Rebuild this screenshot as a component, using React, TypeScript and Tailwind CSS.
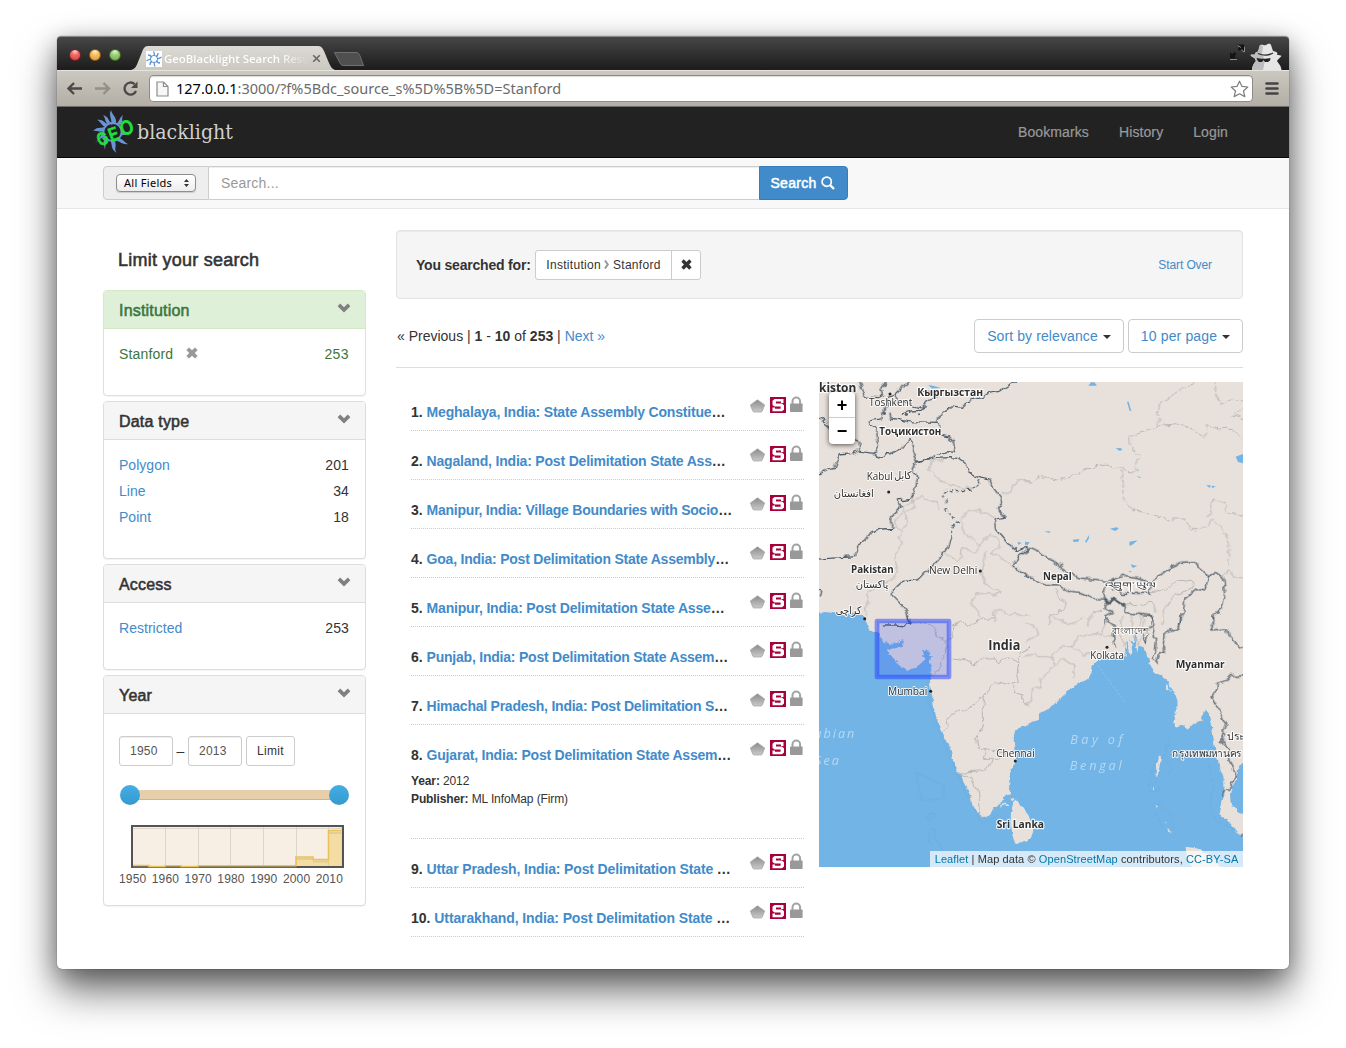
import type { ReactNode } from "react";

const results = [
  ["Meghalaya, India: State Assembly Constitue", "tracking-[-0.19px]"],
  ["Nagaland, India: Post Delimitation State Ass", "tracking-[-0.19px]"],
  ["Manipur, India: Village Boundaries with Socio", "tracking-[-0.24px]"],
  ["Goa, India: Post Delimitation State Assembly", "tracking-[-0.22px]"],
  ["Manipur, India: Post Delimitation State Asse", "tracking-[-0.18px]"],
  ["Punjab, India: Post Delimitation State Assem", "tracking-[-0.22px]"],
  ["Himachal Pradesh, India: Post Delimitation S", "tracking-[-0.24px]"],
  ["Gujarat, India: Post Delimitation State Assem", "tracking-[-0.2px]"],
  ["Uttar Pradesh, India: Post Delimitation State ", "tracking-[-0.15px]"],
  ["Uttarakhand, India: Post Delimitation State ", "tracking-[-0.12px]"],
];

function Chevron() {
  return (
    <svg width="14" height="10" viewBox="0 0 14 10" className="relative left-px mt-[-3px]">
      <path d="M0.6 3.2 L3.2 0.6 L7 4.2 L10.8 0.6 L13.4 3.2 L7 9.4Z" fill="#808080" />
    </svg>
  );
}

function Cross({ className, size }: { className: string; size: number }) {
  return (
    <svg width={size} height={size} viewBox="0 0 12 12" className={className}>
      <path
        d="M3 0.4 L6 3.2 L9 0.4 L11.6 3 L8.8 6 L11.6 9 L9 11.6 L6 8.8 L3 11.6 L0.4 9 L3.2 6 L0.4 3Z"
        fill="currentColor"
      />
    </svg>
  );
}

function Panel({ title, active, children }: { title: string; active?: boolean; children: ReactNode }) {
  return (
    <section
      className={
        active
          ? "overflow-hidden rounded border border-[#d6e9c6] bg-white shadow-[0_1px_1px_rgba(0,0,0,0.05)]"
          : "overflow-hidden rounded border border-[#ddd] bg-white shadow-[0_1px_1px_rgba(0,0,0,0.05)]"
      }
    >
      <h3
        className={
          active
            ? "flex h-[38px] items-center justify-between border-b border-[#d6e9c6] bg-[#dff0d8] px-[15px] text-[16px] tracking-[0.2px] text-[#3c763d] [-webkit-text-stroke:0.55px]"
            : "flex h-[38px] items-center justify-between border-b border-[#ddd] bg-[#f5f5f5] px-[15px] text-[16px] tracking-[0.2px] text-[#333] [-webkit-text-stroke:0.55px]"
        }
      >
        <span className="relative top-px">{title}</span>
        <Chevron />
      </h3>
      {children}
    </section>
  );
}

function Facets({ rows }: { rows: [string, string][] }) {
  return (
    <ul className="pt-3 pr-4 pb-7 pl-[15px]">
      {rows.map(([name, count]) => (
        <li key={name} className="flex h-[26px] items-center justify-between">
          <a className="tracking-[0.03px] text-[#428bca]">{name}</a>
          <span className="tracking-[0.1px]">{count}</span>
        </li>
      ))}
    </ul>
  );
}

function ResultIcons() {
  return (
    <span className="mt-[14px] flex h-[17px] w-[54px] shrink-0">
      <svg width="54" height="18" viewBox="0 0 54 18">
        <defs>
          <linearGradient id="pent" x1="0" y1="0" x2="0" y2="1">
            <stop offset="0" stopColor="#8c8c8c" />
            <stop offset="1" stopColor="#c9c9c9" />
          </linearGradient>
        </defs>
        <path d="M7.500 3.800 L14.700 9 L12.200 15.200 L11.200 16 H3.800 L2.800 15.200 L0.300 9Z" fill="url(#pent)" stroke="#a0a0a0" strokeWidth="0.700" />
        <rect x="20" y="1" width="16" height="16" fill="#a8003a" />
        <path
          d="M24.500 3H33.500V7H31V5.500H26V7.600H32L34 9.200V13.500L32 15.200H22.500V11.400H25V12.800H30.600V10.500H24.500L22.500 9V4.800Z"
          fill="#fff"
        />
        <path d="M42.500 8V5.500A3.800 4 0 0 1 50.100 5.500V8" fill="none" stroke="#a3a3a3" strokeWidth="2" />
        <rect x="40" y="7.500" width="12.600" height="8.500" rx="0.800" fill="#999" />
      </svg>
    </span>
  );
}

function WorldMap() {
  return (
    <svg width="424" height="485" viewBox="0 0 1272 1455" className="block" fontFamily="'Open Sans','Noto Sans','DejaVu Sans',sans-serif">
      <defs>
        <filter id="rough" filterUnits="userSpaceOnUse" x="-60" y="-60" width="1392" height="1575">
          <feTurbulence type="fractalNoise" baseFrequency="0.04" numOctaves="2" seed="4" />
          <feDisplacementMap in="SourceGraphic" scale="22" xChannelSelector="R" yChannelSelector="G" />
        </filter>
        <filter id="coast" filterUnits="userSpaceOnUse" x="-60" y="-60" width="1392" height="1575">
          <feTurbulence type="fractalNoise" baseFrequency="0.05" numOctaves="3" seed="9" />
          <feDisplacementMap in="SourceGraphic" scale="14" xChannelSelector="R" yChannelSelector="G" />
        </filter>
      </defs>
      <rect width="1272" height="1455" fill="#e8e0da" />
      <g filter="url(#coast)">
        <g transform="translate(-12 699)">
          <path
            fill="#73b4e6"
            d="M-30-7 40-8 70-3 90 2 105-5 125-8 150 10 158 28 162 45 178 50 195 52 195 62 205 78 220 86 245 84 268 75 262 92 245 98 215 104 222 118 238 136 258 152 275 164 298 160 318 148 328 130 320 122 330 120 325 105 332 112 340 104 342 120 355 128 342 132 348 150 350 180 345 195 346 215 350 235 356 270 362 300 370 325 382 350 395 380 408 405 413 435 425 458 440 490 455 520 468 545 470 565 485 590 505 610 525 600 535 580 558 565 562 550 575 538 588 535 582 510 585 475 595 450 602 430 598 400 596 370 600 350 612 338 630 335 645 322 668 315 672 300 690 290 715 265 735 255 755 235 775 215 800 200 820 190 830 175 828 160 840 145 848 135 880 130 920 130 932 122 930 95 940 108 944 122 952 110 946 70 956 85 968 110 970 90 985 95 990 110 1000 130 1005 150 1020 170 1035 180 1050 190 1062 205 1075 230 1082 250 1088 270 1085 290 1078 320 1080 335 1100 330 1120 345 1140 325 1160 315 1165 295 1170 285 1182 300 1185 320 1192 340 1195 370 1200 400 1210 440 1217 470 1228 500 1228 540 1220 570 1215 590 1218 605 1235 610 1250 630 1265 650 1284 670 1330 700V790H-30Z"
          />
          <path fill="#73b4e6" d="M1330 430 1284 445 1265 470 1262 500 1250 520 1245 540 1248 570 1265 580 1270 595 1284 600 1330 610Z" />
          <path fill="#e8e0da" d="M597 560 588 590 587 620 592 660 600 680 612 686 630 680 645 672 655 650 652 630 640 600 632 590 625 575 608 560Z" />
          <path fill="#e8e0da" d="M1112 695 1145 700 1160 708 1175 715 1190 730 1220 756V790H1150L1115 725Z" />
          <path fill="#e8e0da" d="M1032 422l6 0-3 25-8 40-7 2 4-30zM1015 515l5-2v12l-5 0zM1060 640l5 2 2 14-5-3zM1022 570l4 2-1 8zM1050 620l3 1 2 8zM1052 205l8 4 4 18-6 2zM1066 225l4 3-2 6z" />
          <path fill="none" stroke="#e8e0da" strokeWidth="5" d="M556 573l15-5 12 4M585 553l12 3" />
          <path fill="none" stroke="#73b4e6" strokeWidth="4" d="M940 120 936 80M958 90 962 60M1215 460 1205 480M1212 520 1204 540M328 130 345 112M332 125 350 135" />
        </g>
      </g>
      <g transform="translate(-12 699)">
        <g fill="none" stroke="#5fa3d8" strokeWidth="2" opacity="0.55">
          <path d="M303 472 388 512 385 550 320 557ZM340 600l15-5 8 5-15 14-12-2zM345 640l16 5-3 25 18 20 8 22M345 650l-5 30 12 10" />
          <path d="M1065 365l-6 25 14-2M1045 395l10-5-3 30-10 4M1030 430l-18 30-10 50 2 18 32 0-14-28M1055 440l18 25-30 20M1030 565l40 35 8 35-10 20-28-20-20-50M1180 450l15 60-10 60 20 50 50 20" strokeDasharray="12 8" />
          <path d="M335 190 340 260 385 380 450 530 500 625 550 600" opacity="0.7" />
        </g>
        <path d="M848 150 930 262" stroke="#9cc9ea" strokeWidth="2" strokeDasharray="8 5" />
      </g>

      {/* internal state lines */}
      <g filter="url(#rough)">
        <g fill="none" stroke="#b9b7b5" strokeWidth="3" strokeLinejoin="round">
          <g transform="translate(-12 -21)">
            <path d="M380 255 345 262 338 285 360 305 385 320 402 330 450 340 480 335 495 320M290 365 300 395 275 410 270 450 255 480 258 510 240 550 250 590 235 610 160 650 150 720" />
            <path d="M375 400 370 380 340 378 320 365 300 375 280 385 262 395 268 410 245 430 240 455 258 465M560 355 590 350 605 315 645 320M435 440 460 410 490 405 512 412 540 430M445 440 450 475 495 515 480 530 440 520 440 545 430 560 390 535 375 535M495 515 520 480 545 490 555 515 530 535 560 550 580 560 590 580 610 580 650 605" />
            <path d="M515 530 505 560 500 590 510 625 560 655 540 660 480 650 475 690 500 730M540 740 535 710 555 700 580 720 645 720" />
          </g>
          <g transform="translate(618 -21)">
            <path strokeDasharray="22 5" d="M0 318 20 318 50 302 95 315 160 298 180 282 240 270 295 285 340 290 328 262 345 245 315 215 310 185 400 153 450 146 510 165 540 188 542 152 580 165 620 160 654 192M400 153 402 95 440 62 475 37 505 30 512 5M565 5 570 45 588 90 620 78 670 82M670 90 625 120 670 132M288 290 295 330 292 370 320 400 345 405 375 418 430 432 480 432 495 460 515 468 550 452 560 430 600 472 610 510 612 580 605 600M555 380 575 372 600 390 610 415 635 418 670 425M555 380 560 405 550 430" />
            <path d="M90 640 100 670 118 680 112 705 75 720 78 750M380 650 420 645 455 615 505 620 500 640 450 660 420 700 410 750M300 690 340 688 385 685 395 710M612 580 590 605M612 580 635 610 670 615M190 750 200 715 235 705M340 720 345 750" />
          </g>
          <g transform="translate(-12 699)">
            <path d="M290 20 325 22 350 35 370 65 392 80 395 115 382 130 375 160 355 180M392 80 415 60 412 30 440 18 460 35 510 10 540 8M410 132 455 138 480 150 505 130 540 128 550 140 590 130 600 142 612 140 615 110 645 100M612 140 605 180 610 205 590 210 545 200 530 215 505 250 470 270 460 290 430 285 395 310 400 335 385 345" />
            <path d="M505 250 505 330 485 370 490 405 510 400 540 410 590 420M510 400 505 430 535 430 530 445 510 470 430 475M590 210 605 235 625 240 630 270 645 270M430 475 470 490 490 530 498 605M540 430 590 420" />
          </g>
          <g transform="translate(618 699)">
            <path d="M0 80 40 60 35 35 0 25M0 125 30 110 40 125 80 125 90 150 75 170 45 195 50 215 20 220 15 265 0 270M90 150 110 130 150 150 145 190M80 125 100 100 150 90 160 60 230 55 245 20M140 90 170 120 200 120M75 0 130 30 175 10M290 5 285 50 300 90M320 0 325 60 340 90M350 0 360 60M240 60 265 65M330 90 350 70" />
          </g>
        </g>

        {/* national borders */}
        <g fill="none" stroke="#4f5e6b" strokeWidth="3.800" strokeLinejoin="round">
          <g transform="translate(-12 -21)">
            <path d="M128 5 148 66 190 68 205 60 200 40 225 5M290 5 255 45 240 60 255 80 290 90 320 100 345 75 372 60 345 50 320 45M225 110 228 130 280 140 370 142 380 110 405 95 440 100 450 80 500 68 520 55 550 50 620 5M205 110 200 130 168 138 162 152 185 165 190 210 175 238 185 248 210 238 225 240 260 220 285 190 298 205 295 235 305 262 340 258 360 240 400 230 422 232 415 200 400 185 375 180 370 145M-5 120 40 152 55 170 85 185 130 200 135 228 175 235M-5 310 40 285 60 280 75 240 105 236 130 228" />
            <path d="M240 60 220 68 212 95 208 115M260 118l30-10 25-2 20-12M290 290 300 265 360 250 405 248 430 250 450 265 460 290 490 308 525 315 532 335 555 365 560 385 550 405 568 430 540 435 545 465 560 480 585 510 605 528 640 515M640 520 605 550 595 575 645 608M290 290 308 300 300 350 285 370 250 375 262 395 230 425 230 460 200 462 170 470 155 495 125 515 122 545 -5 553M410 487 400 515 370 555 335 590 310 615 270 612 235 645 235 662 258 685 275 710 285 750M0 640 20 645 16 665" />
            <path strokeDasharray="12 8" d="M490 315 495 328 470 342 430 350 395 345 380 355 392 385 390 405 410 425 430 442 408 455 410 487" />
          </g>
          <g transform="translate(618 -21)">
            <path d="M0 535 15 517 45 530 90 565 100 562 110 578 150 600 165 612 200 615 240 618 262 610 268 620 270 610 295 604 350 612 375 625 375 655 290 655 262 640 262 612M0 597 20 610 60 632 110 632 135 652 165 655 200 670 238 672 245 680 262 672 298 690M375 625 395 610 430 582 455 570 470 562 510 560 525 580 555 605 545 625 545 645 515 640 480 668 475 710 460 750M555 605 570 590 595 610 602 650 592 700 565 725 562 750M240 620 235 655 245 680 240 700 268 712 240 725 240 750M298 690 298 712 380 722 378 750" />
            <path strokeWidth="7" d="M240 672 255 682 268 674 282 686 298 688" />
          </g>
          <g transform="translate(-12 699)">
            <path d="M207 30 240 30 270 33 288 25 280-2" />
          </g>
          <g transform="translate(618 699)">
            <path d="M240 10 265 30 262 60 268 100M375 0 390 30 345 50 362 85 370 55M385 30 392 70 385 130 395 145 405 110 418 115 420 50 460 42 465 0M562 0 570 20 560 45 605 42 610 65 640 92 670 98M670 178 618 182 610 195 575 205 572 225 558 245 572 270 590 295 605 325 600 345 585 370 612 400 615 435 632 480 620 510 600 530 596 545M654 655v12" />
          </g>
        </g>
      </g>

      {/* lakes */}
      <g fill="#73b4e6" transform="translate(618 -21)">
        <path d="M190 32l8-10h10l8 10zM306 80l5 0 8 28h-5zM272 220l15-1 6 6-10 2zM334 304l14 2-3 3zM632 245l22-8v28l-15-4zM543 331l14 0-2 8zM560 332l12 2-10 6zM254 461l22-4 5 4-10 7zM58 470l14-2 5 6zM143 494l20-2-3 8-14 1zM180 500l12-20 0 10-8 13zM313 500l25-4-14 12-10 5zM317 568l20 5-14 6zM310 588h10l-4 4zM0 500l14 2-6 8-8-1z" />
        <path d="M-290 29l25 6 12 4-26 2zM-22 500l12 4-10 6z" />
      </g>
      <g fill="#56636d">
        <circle cx="300" cy="97" r="3" /><circle cx="262" cy="97" r="5" /><circle cx="196" cy="94" r="5" /><circle cx="272" cy="90" r="3" />
      </g>

      {/* selected extent */}
      <rect x="174" y="717" width="216" height="168" fill="#2540ff" fillOpacity="0.2" stroke="#2545ff" strokeOpacity="0.52" strokeWidth="14" strokeLinejoin="round" />

      <g fill="#222">
        <circle cx="213" cy="36" r="4.500" /><circle cx="209" cy="330" r="4.500" /><circle cx="484" cy="567" r="4.500" /><circle cx="137" cy="710" r="4.500" />
        <circle cx="335" cy="928" r="4.500" /><circle cx="589" cy="1137" r="4.500" /><circle cx="864" cy="796" r="4.500" />
      </g>

      <g fill="#2f2f2f" stroke="#fff" strokeOpacity="0.85" strokeWidth="7" strokeLinejoin="round" paintOrder="stroke">
        <g fontWeight="700" fontSize="35">
          <text x="0" y="30" textLength="112" lengthAdjust="spacingAndGlyphs">kiston</text>
          <text x="295" y="41" fontSize="31" textLength="197" lengthAdjust="spacingAndGlyphs">Кыргызстан</text>
          <text x="181" y="158" fontSize="31" textLength="186" lengthAdjust="spacingAndGlyphs">Тоҷикистон</text>
          <text x="96" y="572" fontSize="31" textLength="128" lengthAdjust="spacingAndGlyphs">Pakistan</text>
          <text x="508" y="804" fontSize="41" textLength="96" lengthAdjust="spacingAndGlyphs">India</text>
          <text x="672" y="593" fontSize="31" textLength="86" lengthAdjust="spacingAndGlyphs">Nepal</text>
          <text x="1070" y="859" fontSize="33" textLength="147" lengthAdjust="spacingAndGlyphs">Myanmar</text>
          <text x="533" y="1337" fontSize="32" textLength="142" lengthAdjust="spacingAndGlyphs">Sri Lanka</text>
        </g>
        <g fontSize="33" strokeWidth="6">
          <text x="150" y="71" textLength="130" lengthAdjust="spacingAndGlyphs">Toshkent</text>
          <text x="143" y="293" textLength="78" lengthAdjust="spacingAndGlyphs">Kabul</text>
          <text x="226" y="291" fontSize="32" textLength="52" lengthAdjust="spacingAndGlyphs">كابل</text>
          <text x="44" y="345" fontSize="32" textLength="120" lengthAdjust="spacingAndGlyphs">افغانستان</text>
          <text x="330" y="577" textLength="145" lengthAdjust="spacingAndGlyphs">New Delhi</text>
          <text x="110" y="617" fontSize="32" textLength="98" lengthAdjust="spacingAndGlyphs">پاکستان</text>
          <text x="50" y="697" fontSize="32" textLength="77" lengthAdjust="spacingAndGlyphs">کراچی</text>
          <text x="207" y="938" textLength="118" lengthAdjust="spacingAndGlyphs">Mumbai</text>
          <text x="532" y="1124" textLength="115" fontWeight="500" lengthAdjust="spacingAndGlyphs" stroke="#fff">Chennai</text>
          <text x="814" y="831" textLength="101" lengthAdjust="spacingAndGlyphs">Kolkata</text>
          <text x="878" y="757" fontSize="28" textLength="108" lengthAdjust="spacingAndGlyphs">বাংলাদেশ</text>
          <text x="857" y="618" fontSize="24" textLength="156" lengthAdjust="spacingAndGlyphs">འབྲུག་ཡུལ</text>
          <text x="1060" y="1124" fontSize="29" textLength="208" lengthAdjust="spacingAndGlyphs">กรุงเทพมหานคร</text>
          <text x="1224" y="1075" fontSize="29" textLength="52" lengthAdjust="spacingAndGlyphs">ประ</text>
        </g>
      </g>
      <g fill="#b4d8f4" fontStyle="italic" fontSize="38">
        <text x="-14" y="1068" textLength="120">abian</text>
        <text x="-12" y="1149" textLength="72">Sea</text>
        <text x="754" y="1085" textLength="156">Bay of</text>
        <text x="752" y="1163" textLength="156">Bengal</text>
      </g>
    </svg>
  );
}

function Histogram() {
  return (
    <svg width="213" height="43" viewBox="0 0 213 43" className="ml-3 block">
      <rect x="1" y="1" width="211" height="41" fill="#f8efe4" stroke="#545454" strokeWidth="2" />
      <path d="M34.500 2V41M67.500 2V41M99.500 2V41M132.500 2V41M165.500 2V41M197.500 2V41M2 3.500H211M210.500 2V41" stroke="#ddd5ca" fill="none" />
      <path d="M165 41V32H182V34.500H198V6H210V41Z" fill="#edc240" fillOpacity="0.4" />
      <path d="M2 42.500H165" stroke="#8a6f2c" strokeOpacity="0.6" />
      <path d="M198 8H210M166 34H181M182 36.500H197" stroke="#000" strokeOpacity="0.07" strokeWidth="2" />
      <path d="M2 40.500H18V41.500H34V40.800H50V41.500H67V40.800H165V32H182V34.500H197.500V5.500H210" fill="none" stroke="#e9c25a" strokeWidth="1.600" />
    </svg>
  );
}

function BrowserChrome() {
  return (
    <>
      <div className="flex h-[34px] items-end rounded-t-[4px] border-t border-[#8a8a8a] bg-linear-to-b from-[#474747] to-[#1c1c1c]">
        <div className="mb-[9px] ml-[12px] flex gap-2">
          <i className="size-3 rounded-full border border-[#7b1f1f] bg-[radial-gradient(circle_at_50%_15%,#fbd0cc_0,#ee6f6a_35%,#d8393a_100%)]" />
          <i className="size-3 rounded-full border border-[#8a5a14] bg-[radial-gradient(circle_at_50%_15%,#fff0c8_0,#f5bd62_40%,#e79c2e_100%)]" />
          <i className="size-3 rounded-full border border-[#3c6a26] bg-[radial-gradient(circle_at_50%_15%,#e0f5ce_0,#9ace7a_40%,#6bac47_100%)]" />
        </div>
        <div className="relative ml-[10px] h-[25px] w-[204px]">
          <svg width="204" height="25" viewBox="0 0 204 25" className="absolute inset-0">
            <defs>
              <linearGradient id="tab" x1="0" y1="0" x2="0" y2="1">
                <stop offset="0" stopColor="#dcdad5" />
                <stop offset="1" stopColor="#cbc8c0" />
              </linearGradient>
            </defs>
            <path d="M0 25C4 24 5 22 7 17L11 7C13 2 14 1 18 1H186C190 1 191 2 193 6L198 18C200 22 201 24 204 25Z" fill="url(#tab)" />
          </svg>
          <div className="relative flex h-full items-center pt-0.5 pl-[15px]">
            <svg width="16" height="16" viewBox="0 0 16 16" className="shrink-0">
              <rect width="16" height="16" fill="#fff" />
              <g stroke="#5b95d6" strokeWidth="1.300" fill="none">
                <path d="M8 5Q9 3 7.500 0.500M10 5.500Q12 5 12 2M11 7.500Q13 8 15.500 6M10.500 9.500Q11 12 14 12M8.500 11Q7.500 13 9 15.500M6 10.500Q4 11 4 14M5 8.500Q3 8 0.500 10M5.500 6.500Q5 4 2 4" />
                <circle cx="8" cy="8" r="3.600" strokeWidth="1" />
              </g>
            </svg>
            <span className="ml-0.5 w-[146px] overflow-hidden bg-linear-to-r from-white from-78% to-transparent bg-clip-text font-['Open_Sans'] text-[11.5px] font-semibold tracking-[-0.05px] whitespace-nowrap text-transparent">
              GeoBlacklight Search Resu
            </span>
            <svg width="9" height="9" viewBox="0 0 9 9" className="ml-[2px]">
              <path d="M1.200 1.200 7.800 7.800M7.800 1.200 1.200 7.800" stroke="#666" strokeWidth="1.600" />
            </svg>
          </div>
        </div>
        <svg width="32" height="16" viewBox="0 0 32 16" className="mb-[3px] ml-[-2px]">
          <path d="M1.500 1.500H23C26 1.500 26 3 27 5L30.500 14.500H11C8 14.500 7.500 13 6.500 11Z" fill="#4f4f4f" stroke="#707070" />
        </svg>
        <svg width="56" height="28" viewBox="0 0 56 28" className="mr-[6px] ml-auto">
          <path d="M10.500 2.500H17V9L14.800 6.800 12.500 9 10.500 7 12.800 4.700ZM3 10V16.500H9.500L7.300 14.300 9.500 12 7.500 10 5.200 12.200Z" fill="#141414" />
          <path d="M3 17.500H10M17.500 5V10M11 3.500l3 2M14.500 8l2.500 2" stroke="#8c8c8c" fill="none" />
          <path d="M33 3C36 2 37 4 39 3 41 2 43 1 44 3L46 9C50 9.500 51 11 50 13 52 13 53.500 13 54.500 14 53 16 51 17 50 19 51 21 54 23 54.500 28H25C25 24 27 21 29 19L27.500 16C25 15 24 14 23.500 13 25 12 26 13 28 12.500 27.500 11 29 10 31 9.500Z" fill="#e6e6e6" />
          <path d="M33 3 36 4 35 12 38 18 36 28H25C25 24 27 21 29 19L27.500 16C25 15 24 14 23.500 13L28 12.500C27.500 11 29 10 31 9.500Z" fill="#bdbdbd" />
          <path d="M31 11.500Q39 15 46 11" stroke="#2a2a2a" strokeWidth="1.300" fill="none" />
          <path d="M29.500 16C33 17 40 17 43.500 16L43 18.500 41 20H38L36.500 18 35 20H32L30.500 18.500Z" fill="#222" />
        </svg>
      </div>
      <div className="flex h-[37px] items-center border-t border-b border-t-[#e6e4df] border-b-[#6f6d69] bg-linear-to-b from-[#cbc8c0] to-[#b3aea6] pr-[10px] pl-[10px]">
        <svg width="76" height="20" viewBox="0 0 76 20" fill="none" strokeWidth="2.400">
          <path d="M15 9.500H1.500M7 4 1.500 9.500 7 15" stroke="#4b4a48" />
          <path d="M28 9.500H42M36.500 4 42 9.500 36.500 15" stroke="#949089" />
          <path d="M69 12A6 6 0 1 1 67.500 5.100" stroke="#4b4a48" />
          <path d="M70.500 2.500V9H64Z" fill="#4b4a48" />
        </svg>
        <div className="ml-[6px] flex h-[27px] w-[1104px] items-center rounded border border-[#8f8c87] bg-white shadow-[inset_0_1px_1px_rgba(0,0,0,0.15)]">
          <svg width="13" height="16" viewBox="0 0 13 16" className="ml-[6px]">
            <path d="M1 1H7.500L12 5.500V15H1ZM7.500 1V5.500H12" fill="#f7f7f7" stroke="#8b8b8b" strokeWidth="1.200" />
          </svg>
          <span className="ml-[7px] pb-px font-['Noto_Sans'] text-[14.5px] tracking-[0.01px] whitespace-nowrap text-[#6b6b6b]">
            <span className="text-black">127.0.0.1</span>:3000/?f%5Bdc_source_s%5D%5B%5D=Stanford
          </span>
          <svg width="19" height="18" viewBox="0 0 19 18" className="mr-[3px] ml-auto">
            <path d="M9.500 1.200 12 6.400 17.800 7 13.500 11 14.800 16.600 9.500 13.800 4.200 16.600 5.500 11 1.200 7 7 6.400Z" fill="#fff" stroke="#7d7d7d" strokeWidth="1.200" strokeLinejoin="round" />
          </svg>
        </div>
        <svg width="14" height="15" viewBox="0 0 14 15" className="ml-3">
          <path d="M1.500 2.500H12.500M1.500 7.500H12.500M1.500 12.500H12.500" stroke="#444" strokeWidth="2.600" strokeLinecap="round" />
        </svg>
      </div>
    </>
  );
}

function Logo() {
  return (
    <svg width="145" height="46" viewBox="0 0 145 46">
      <g fill="#6a94d4">
        <path d="M19 1C20 6 25 8 24 14L19 16C21 11 16 7 19 1Z" />
        <path d="M31 6C29 10 32 12 28 16L24 15C28 12 27 9 31 6Z" />
        <path d="M39 24C36 22 33 24 29 22L29 26C33 27 35 24 39 24Z" />
        <path d="M36 35C33 34 31 30 27 29L25 32C29 33 31 36 36 35Z" />
        <path d="M25 44C21 40 26 37 22 31L18 31C21 36 18 40 25 44Z" />
        <path d="M13 41C14 37 12 35 17 31L14 29C9 33 13 37 13 41Z" />
        <path d="M3 34C6 33 7 29 13 28L11 24C7 27 8 31 3 34Z" />
        <path d="M1 22C5 21 8 24 12 22L12 18C8 20 6 17 1 22Z" />
        <path d="M5 11C9 12 9 17 14 18L16 15C12 14 11 10 5 11Z" />
        <path d="M11 6C14 9 12 13 17 16L19 14C16 11 17 8 11 6Z" />
      </g>
      <circle cx="20.500" cy="23" r="9" fill="none" stroke="#6a94d4" strokeWidth="1.800" />
      <g fill="#1fe03c" stroke="#1fe03c" strokeWidth="0.800" fontFamily="Inter, sans-serif" fontSize="18" fontWeight="500">
        <text transform="translate(8 37.500) rotate(-24)" fontSize="17" textLength="11" lengthAdjust="spacingAndGlyphs">G</text>
        <text transform="translate(19 33) rotate(-20)" textLength="10" lengthAdjust="spacingAndGlyphs">E</text>
        <text transform="translate(30 27) rotate(-16)" fontSize="19" textLength="13.500" lengthAdjust="spacingAndGlyphs">O</text>
      </g>
      <text x="45" y="30" fill="#d0d0d0" fontFamily="'DejaVu Serif', serif" fontSize="20" textLength="96" lengthAdjust="spacingAndGlyphs">blacklight</text>
    </svg>
  );
}

export default function App() {
  return (
    <div className="h-[1048px] w-[1346px] overflow-hidden bg-white pt-[36px] pl-[57px] font-['Liberation_Sans',Arial,sans-serif] text-[14px] leading-5 text-[#333]">
      <div className="h-[933px] w-[1232px] rounded-[5px] bg-white shadow-[0_0_1px_rgba(0,0,0,0.7),0_22px_40px_rgba(0,0,0,0.55),0_6px_24px_rgba(0,0,0,0.3)]">
        <BrowserChrome />

        <nav className="flex h-[51px] items-center border-b border-[#080808] bg-[#222] pl-[35px] text-[#999]">
          <Logo />
          <div className="mr-[61px] ml-auto flex gap-[30px] tracking-[0.1px] [-webkit-text-stroke:0.2px]">
            <a>Bookmarks</a>
            <a>History</a>
            <a>Login</a>
          </div>
        </nav>

        <div className="h-[51px] border-b border-[#e7e7e7] bg-[#f8f8f8] pt-2 pl-[46px]">
          <form className="flex h-[34px] w-[745px]">
            <div className="flex w-[106px] items-center rounded-l border border-[#ccc] bg-[#eee] pl-3">
              <span className="flex h-[18px] w-[80px] items-center justify-between rounded border border-[#8e8e8e] bg-linear-to-b from-white to-[#ededed] pr-[6px] pl-[7px] font-['Noto_Sans'] text-[11px] tracking-[0.3px] text-black shadow-[0_1px_1px_rgba(0,0,0,0.15)]">
                All Fields
                <svg width="5" height="8" viewBox="0 0 5 8"><path d="M2.500 0 5 3H0ZM2.500 8 5 5H0Z" fill="#333" /></svg>
              </span>
            </div>
            <div className="flex flex-1 items-center border-y border-[#ccc] bg-white pl-[12px] tracking-[0.2px] text-[#999] shadow-[inset_0_1px_1px_rgba(0,0,0,0.075)]">
              Search...
            </div>
            <div className="flex w-[89px] items-center justify-center gap-1 rounded-r border border-[#357ebd] bg-[#428bca] pr-0.5 tracking-[0.3px] text-white [-webkit-text-stroke:0.5px]">
              Search
              <svg width="14" height="14" viewBox="0 0 14 14" fill="none" stroke="#fff">
                <circle cx="5.700" cy="5.700" r="4.600" strokeWidth="1.700" />
                <path d="M9 9 13 13" strokeWidth="2.400" />
              </svg>
            </div>
          </form>
        </div>

        <div className="flex gap-[30px] pt-[21px] pl-[46px]">
          <aside className="w-[263px]">
            <h2 className="mt-5 mb-5 ml-[15px] text-[18px] tracking-[0.24px] [-webkit-text-stroke:0.55px]">Limit your search</h2>
            <div className="flex flex-col gap-[5px]">
              <Panel title="Institution" active>
                <div className="flex items-start pt-3 pr-4 pb-7 pl-[15px] text-[#3c763d]">
                  <span className="flex h-[26px] items-center tracking-[0.15px]">Stanford</span>
                  <Cross size={12} className="mt-[6px] ml-[13px] text-[#999]" />
                  <span className="ml-auto flex h-[26px] items-center tracking-[0.4px]">253</span>
                </div>
              </Panel>
              <Panel title="Data type">
                <Facets rows={[["Polygon", "201"], ["Line", "34"], ["Point", "18"]]} />
              </Panel>
              <Panel title="Access">
                <Facets rows={[["Restricted", "253"]]} />
              </Panel>
              <Panel title="Year">
                <div className="h-[191px] px-[15px] pt-[22px] text-[12px]">
                  <div className="flex h-[30px] items-center">
                    <span className="flex h-full w-[54px] items-center rounded-[3px] border border-[#ccc] pl-[10px] tracking-[0.25px] text-[#555] shadow-[inset_0_1px_1px_rgba(0,0,0,0.075)]">1950</span>
                    <span className="w-[15px] text-center text-[14px]">–</span>
                    <span className="flex h-full w-[54px] items-center rounded-[3px] border border-[#ccc] pl-[10px] tracking-[0.25px] text-[#555] shadow-[inset_0_1px_1px_rgba(0,0,0,0.075)]">2013</span>
                    <span className="ml-1 flex h-full w-[49px] items-center justify-center rounded-[3px] border border-[#ccc] tracking-[0.3px]">Limit</span>
                  </div>
                  <div className="mt-[19px] ml-px flex h-5 w-[229px] items-center">
                    <i className="z-10 size-5 shrink-0 rounded-full bg-linear-to-b from-[#45aee4] to-[#3499cf]" />
                    <i className="-mx-2.5 h-[10px] flex-1 border-b border-[#cdb493] bg-[#e8cfab]" />
                    <i className="z-10 size-5 shrink-0 rounded-full bg-linear-to-b from-[#45aee4] to-[#3499cf]" />
                  </div>
                  <div className="mt-5">
                    <Histogram />
                  </div>
                  <div className="flex w-[224px] justify-between pt-px tracking-[0.15px] text-[#545454]">
                    {["1950", "1960", "1970", "1980", "1990", "2000", "2010"].map((y) => (
                      <span key={y}>{y}</span>
                    ))}
                  </div>
                </div>
              </Panel>
            </div>
          </aside>

          <main className="w-[847px]">
            <div className="flex h-[69px] items-center rounded border border-[#e3e3e3] bg-[#f5f5f5] pr-[30px] pl-[19px] shadow-[inset_0_1px_1px_rgba(0,0,0,0.05)]">
              <b className="w-[119px] tracking-[-0.2px] whitespace-nowrap">You searched for:</b>
              <span className="flex h-[30px] items-center rounded-[3px] border border-[#ccc] bg-white text-[12px] tracking-[0.3px]">
                <span className="flex h-full w-[136px] items-center justify-center gap-[3px] border-r border-[#ccc]">
                  Institution
                  <svg width="6" height="9" viewBox="0 0 6 9"><path d="M1 0.500 3.800 4.500 1 8.500" stroke="#999" strokeWidth="2" fill="none" /></svg>
                  Stanford
                </span>
                <span className="flex w-[28px] justify-center">
                  <Cross size={11} className="text-[#333]" />
                </span>
              </span>
              <a className="ml-auto text-[12px] tracking-[-0.1px] text-[#428bca]">Start Over</a>
            </div>

            <div className="flex h-[69px] items-center border-b border-[#ddd] pb-0.5">
              <span className="pt-[7px] pl-px">
                « Previous | <b>1</b> - <b>10</b> of <b>253</b> | <a className="text-[#428bca]">Next »</a>
              </span>
              <div className="mt-[7px] ml-auto flex gap-1 text-[#428bca]">
                <span className="flex h-[34px] w-[150px] items-center justify-center gap-[5px] rounded border border-[#ccc] tracking-[0.1px]">
                  Sort by relevance
                  <i className="mt-0.5 border-x-4 border-t-4 border-x-transparent border-t-[#333]" />
                </span>
                <span className="flex h-[34px] w-[115px] items-center justify-center gap-[5px] rounded border border-[#ccc] tracking-[0.15px]">
                  10 per page
                  <i className="mt-0.5 border-x-4 border-t-4 border-x-transparent border-t-[#333]" />
                </span>
              </div>
            </div>

            <div className="mt-[14px] flex">
              <ol className="mr-[15px] ml-[15px] w-[393px]">
                {results.map(([title, tracking], i) => (
                  <li key={title} className={i === 7 ? "h-[114px] border-b border-dotted border-[#ccc]" : "h-[49px] border-b border-dotted border-[#ccc]"}>
                    <div className="flex justify-between">
                      <b className="pt-5 whitespace-nowrap">
                        {i + 1}. <a className={`text-[#428bca] ${tracking}`}>{title}</a>…
                      </b>
                      <ResultIcons />
                    </div>
                    {i === 7 && (
                      <div className="mt-[7px] text-[12px] leading-[18px] tracking-[-0.12px]">
                        <p><b>Year:</b> 2012</p>
                        <p><b>Publisher:</b> ML InfoMap (Firm)</p>
                      </div>
                    )}
                  </li>
                ))}
              </ol>

              <div className="relative h-[485px] w-[424px] overflow-hidden">
                <WorldMap />
                <div className="absolute top-[10px] left-[10px] w-[26px] rounded bg-white text-center text-[18px] font-bold text-black shadow-[0_1px_5px_rgba(0,0,0,0.65)]">
                  <div className="h-[26px] border-b border-[#ccc] leading-[26px]">+</div>
                  <div className="h-[26px] leading-[26px]">−</div>
                </div>
                <div className="absolute right-0 bottom-0 flex h-[16px] w-[313px] items-center justify-center bg-white/70 text-[11px] tracking-[0.1px] whitespace-pre text-[#333]">
                  <a className="text-[#0078a8]">Leaflet</a> | Map data © <a className="text-[#0078a8]">OpenStreetMap</a> contributors, <a className="text-[#0078a8]">CC-BY-SA</a>
                </div>
              </div>
            </div>
          </main>
        </div>
      </div>
    </div>
  );
}
